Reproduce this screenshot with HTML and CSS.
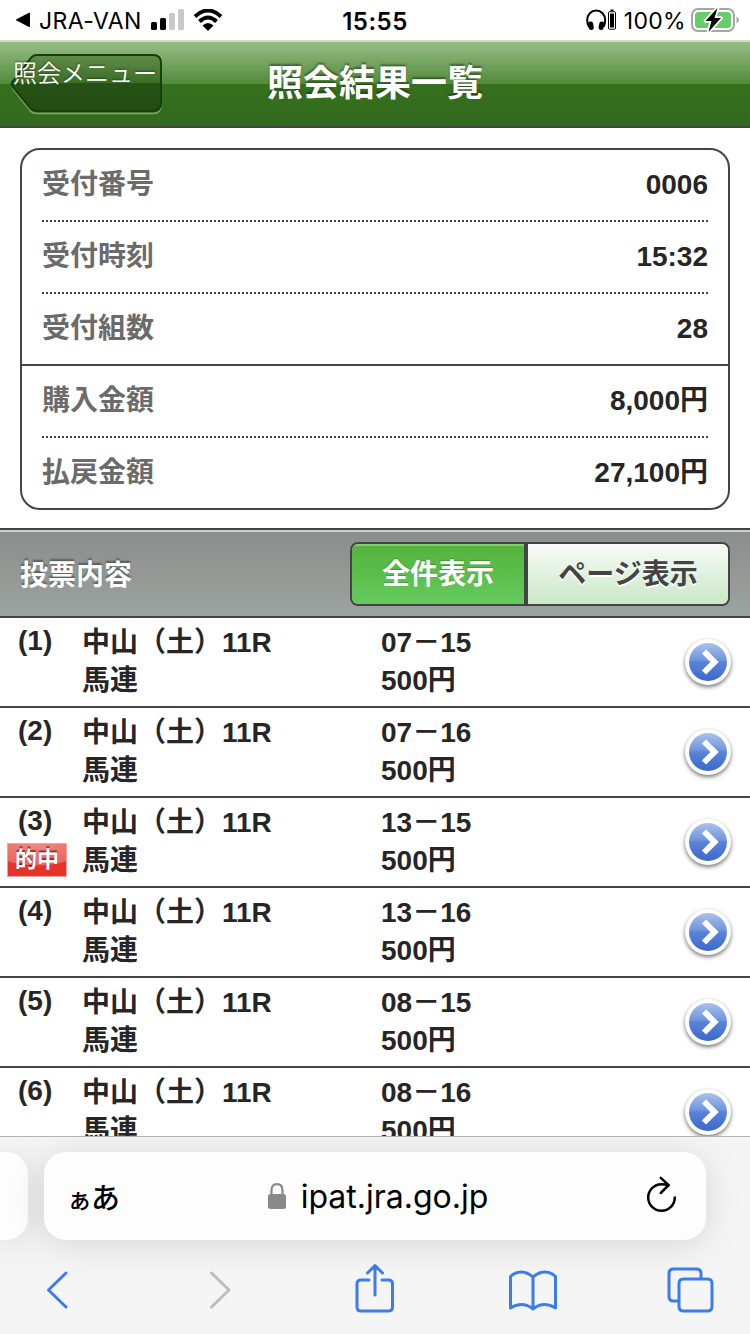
FILE: index.html
```html
<!DOCTYPE html>
<html lang="ja">
<head>
    <meta charset="UTF-8">
    <meta name="viewport" content="width=device-width, initial-scale=1.0">
    <title>照会結果一覧</title>
    <link rel="stylesheet" href="styles.css">
</head>
<body>
    <!-- Shared icons -->
    <svg class="defs" width="0" height="0">
        <defs>
            <linearGradient id="blue" x1="0" y1="0" x2="0" y2="1">
                <stop offset="0" stop-color="#aac2ec"/>
                <stop offset="0.45" stop-color="#6f94de"/>
                <stop offset="0.5" stop-color="#5a83d8"/>
                <stop offset="1" stop-color="#3a69cb"/>
            </linearGradient>
            <linearGradient id="menuFill" x1="0" y1="0" x2="0" y2="1">
                <stop offset="0" stop-color="#5f8d49"/>
                <stop offset="0.5" stop-color="#3b6e25"/>
                <stop offset="0.51" stop-color="#255214"/>
                <stop offset="1" stop-color="#234c13"/>
            </linearGradient>
            <symbol id="go" viewBox="0 0 54 54">
                <circle cx="27" cy="25" r="23" fill="#fff"/>
                <circle cx="27" cy="25" r="19" fill="url(#blue)"/>
                <path d="M23 14.500l10.500 10.500-10.500 10.500" fill="none" stroke="#fff" stroke-width="6"/>
            </symbol>
        </defs>
    </svg>

    <div class="status-bar">
        <div class="status-left">
            <svg class="back-app" width="16" height="16" viewBox="0 0 16 16"><path d="M1.500 7.200L14 .8Q15 .5 15 1.600V14.200Q15 15.300 14 14.900L1.500 8.600Q0 7.900 1.500 7.200z"/></svg>
            <span class="carrier">JRA-VAN</span>
            <svg class="signal" width="34" height="22" viewBox="0 0 34 22">
                <rect x="1" y="13" width="6" height="8" rx="1.500"/>
                <rect x="10" y="9" width="6" height="12" rx="1.500"/>
                <rect x="19" y="4" width="6" height="17" rx="1.500" fill="#c9c9c9"/>
                <rect x="28" y="0" width="6" height="21" rx="1.500" fill="#c9c9c9"/>
            </svg>
            <svg class="wifi" width="30" height="22" viewBox="0 0 30 22">
                <path d="M2 7.500Q15-4.500 28 7.500M6.500 12.500Q15 4.500 23.500 12.500" fill="none" stroke="#000" stroke-width="4"/>
                <path d="M9.500 16.500Q15 11.500 20.500 16.500L15 22z"/>
            </svg>
        </div>
        <div class="time">15:55</div>
        <div class="status-right">
            <svg width="31" height="22" viewBox="0 0 31 22">
                <path d="M3 18Q1.200 15.500 1.200 11A9 9.500 0 0 1 19.200 11Q19.200 15.500 17.400 18" fill="none" stroke="#000" stroke-width="2"/>
                <rect x="2.500" y="12.500" width="5" height="8.500" rx="2.500" transform="rotate(-10 5 17)"/>
                <rect x="12.900" y="12.500" width="5" height="8.500" rx="2.500" transform="rotate(10 15.400 17)"/>
                <rect x="22.500" y="2.700" width="7" height="17.500" rx="1" fill="none" stroke="#000" stroke-width="1"/>
                <rect x="24" y="4.500" width="4" height="14"/>
                <rect x="24.500" y="0.500" width="3" height="1.500"/>
            </svg>
            <span class="percent">100%</span>
            <svg class="battery" width="48" height="26" viewBox="0 0 48 26">
                <rect x="1" y="2" width="42" height="22" rx="6" fill="none" stroke="#a6a6a6" stroke-width="2"/>
                <rect x="4" y="5" width="36" height="16" rx="3.500" fill="#65ce68"/>
                <path d="M45.500 9.500Q48 11 48 13T45.500 16.500z" fill="#a6a6a6"/>
                <path d="M26.500 1L14.500 14H20.500L17.500 25L30 11H23.500z" stroke="#fff" stroke-width="3.500" stroke-linejoin="round" paint-order="stroke"/>
            </svg>
        </div>
    </div>

    <div class="page">
        <header class="header">
            <a class="menu-button">
                <svg class="menu-shape" width="154" height="62" viewBox="0 0 154 62">
                    <path d="M27 2H143Q151 2 151 10V50Q151 58 143 58H27Q23 58 20 55L3.500 34Q1 30.500 3.500 27L20 6Q23 2 27 2z" transform="translate(0 1.500)" fill="none" stroke="#7fa66c" stroke-width="1.500"/>
                    <path d="M27 1H143Q151 1 151 9V49Q151 57 143 57H27Q23 57 20 54L3 33Q.5 30 3 27L20 5Q23 1 27 1z" fill="url(#menuFill)" stroke="#173f0b" stroke-width="2"/>
                </svg>
                <span class="menu-text">照会メニュー</span>
            </a>
            <h1 class="title">照会結果一覧</h1>
        </header>

        <dl class="summary">
            <div class="summary-row"><dt>受付番号</dt><dd>0006</dd></div>
            <div class="summary-row"><dt>受付時刻</dt><dd>15:32</dd></div>
            <div class="summary-row group-end"><dt>受付組数</dt><dd>28</dd></div>
            <div class="summary-row"><dt>購入金額</dt><dd>8,000円</dd></div>
            <div class="summary-row last"><dt>払戻金額</dt><dd>27,100円</dd></div>
        </dl>

        <div class="section-bar">
            <h2 class="section-title">投票内容</h2>
            <div class="switch">
                <a class="switch-item active">全件表示</a>
                <a class="switch-item">ページ表示</a>
            </div>
        </div>

        <ul class="bets">
            <li class="bet">
                <div class="no">(1)</div>
                <div class="race">中山（土）11R<br>馬連</div>
                <div class="pick">07－15<br>500円</div>
                <svg class="go"><use href="#go"/></svg>
            </li>
            <li class="bet">
                <div class="no">(2)</div>
                <div class="race">中山（土）11R<br>馬連</div>
                <div class="pick">07－16<br>500円</div>
                <svg class="go"><use href="#go"/></svg>
            </li>
            <li class="bet">
                <div class="no">(3)<span class="hit">的中</span></div>
                <div class="race">中山（土）11R<br>馬連</div>
                <div class="pick">13－15<br>500円</div>
                <svg class="go"><use href="#go"/></svg>
            </li>
            <li class="bet">
                <div class="no">(4)</div>
                <div class="race">中山（土）11R<br>馬連</div>
                <div class="pick">13－16<br>500円</div>
                <svg class="go"><use href="#go"/></svg>
            </li>
            <li class="bet">
                <div class="no">(5)</div>
                <div class="race">中山（土）11R<br>馬連</div>
                <div class="pick">08－15<br>500円</div>
                <svg class="go"><use href="#go"/></svg>
            </li>
            <li class="bet">
                <div class="no">(6)</div>
                <div class="race">中山（土）11R<br>馬連</div>
                <div class="pick">08－16<br>500円</div>
                <svg class="go"><use href="#go"/></svg>
            </li>
        </ul>
    </div>

    <div class="browser-bar">
        <div class="tabs">
            <div class="tab-prev"></div>
            <div class="address">
                <span class="text-size"><small>ぁ</small>あ</span>
                <div class="url">
                    <svg width="18" height="26" viewBox="0 0 18 26">
                        <path d="M3.500 12V7.500Q3.500 1.200 9 1.200T14.500 7.500V12" fill="none" stroke="#88888d" stroke-width="2.200"/>
                        <rect x="0" y="11" width="18" height="15" rx="2.500" fill="#88888d"/>
                    </svg>
                    <span>ipat.jra.go.jp</span>
                </div>
                <svg class="reload" width="32" height="38" viewBox="0 0 32 38">
                    <path d="M23.500 8.200Q20 7.200 16.500 7.200A13.300 13.300 0 1 0 29.800 20.500" fill="none" stroke="#000" stroke-width="2.500" stroke-linecap="round"/>
                    <path d="M15.800 .8L23.600 8.200L15.800 16" fill="none" stroke="#000" stroke-width="2.500" stroke-linecap="round" stroke-linejoin="round"/>
                </svg>
            </div>
        </div>
        <div class="toolbar">
            <svg class="tool" viewBox="0 0 56 56"><path d="M37 12L19.500 29L37 46"/></svg>
            <svg class="tool disabled" viewBox="0 0 56 56"><path d="M23.500 12L41 29L23.500 46"/></svg>
            <svg class="tool" viewBox="0 0 56 56"><path d="M23 19H15Q11 19 11 23V46Q11 50 15 50H42.500Q46.500 50 46.500 46V23Q46.500 19 42.500 19H36M29 34V5M21.500 12L29 4.500L36.500 12"/></svg>
            <svg class="tool" viewBox="0 0 56 56"><path d="M28 16Q22 11 16.500 11Q10 11 5.500 15.500V47Q11 43.500 16.500 43.500Q22.500 43.500 28 48Q33.500 43.500 39.500 43.500Q45 43.500 50.500 47V15.500Q46 11 39.500 11Q34 11 28 16zM28 16V47"/></svg>
            <svg class="tool" viewBox="0 0 56 56"><path d="M15.500 40H10.500Q6 40 6 35.500V12.500Q6 8 10.500 8H33.500Q38 8 38 12.500V17.500M20.500 18H44.500Q49 18 49 22.500V45.500Q49 50 44.500 50H20.500Q16 50 16 45.500V22.500Q16 18 20.500 18z"/></svg>
        </div>
    </div>
</body>
</html>
```
FILE: styles.css
```css
* {
    box-sizing: border-box;
    margin: 0;
    padding: 0;
}

body {
    display: flex;
    flex-direction: column;
    width: 750px;
    height: 1334px;
    overflow: hidden;
    background-color: #fff;
    color: #262626;
    font-family: "Liberation Sans", "Noto Sans CJK JP", sans-serif;
    font-size: 28px;
}

svg {
    display: block;
    flex-shrink: 0;
}

.defs {
    position: absolute;
}

/* Status bar */
.status-bar {
    display: grid;
    grid-template-columns: 1fr auto 1fr;
    align-items: center;
    height: 40px;
    flex-shrink: 0;
    color: #000;
    font-family: Inter, sans-serif;
    font-size: 23px;
}

.status-left,
.status-right {
    display: flex;
    align-items: center;
}

.status-left {
    padding-left: 15px;
}

.status-right {
    justify-content: flex-end;
    padding-right: 11px;
}

.carrier {
    margin-left: 8px;
    padding-top: 2px;
    letter-spacing: 0.4px;
}

.signal {
    margin-left: 8px;
}

.wifi {
    margin-left: 9px;
}

.time {
    padding-top: 2px;
    font-weight: 600;
    font-size: 24px;
    letter-spacing: 0.5px;
}

.percent {
    margin: 0 5px 0 7px;
    padding-top: 2px;
    letter-spacing: 0.3px;
}

/* Page */
.page {
    flex: 1;
    overflow: hidden;
}

.header {
    display: grid;
    grid-template-columns: 1fr auto 1fr;
    height: 88px;
    padding-left: 10px;
    border-top: 2px solid #cbddc3;
    border-bottom: 2px solid #444;
    background: linear-gradient(#96bd86, #528b3a 50%, #35711d 50%, #33691d);
}

.menu-button {
    position: relative;
    height: 60px;
    margin-top: 12px;
}

.menu-shape {
    position: absolute;
    top: 0;
    left: 0;
}

.menu-text {
    position: relative;
    display: block;
    padding-left: 3px;
    color: #fff;
    font-size: 24px;
    font-weight: 350;
    line-height: 40px;
    text-shadow: 0 -1px 2px rgba(0, 0, 0, 0.4);
}

.title {
    margin-left: -10px;
    color: #fff;
    font-size: 36px;
    line-height: 84px;
    text-shadow: 0 -2px 2px rgba(0, 0, 0, 0.4);
}

/* Summary */
.summary {
    margin: 20px 20px 18px;
    border: 2px solid #444;
    border-radius: 20px;
    font-weight: bold;
}

.summary-row {
    display: flex;
    justify-content: space-between;
    height: 72px;
    margin: 0 20px;
    border-bottom: 2px dotted #444;
    line-height: 70px;
}

.summary-row dt {
    color: #6b6b6b;
}

.group-end {
    margin: 0;
    padding: 0 20px;
    border-bottom-style: solid;
}

.last {
    height: 70px;
    border-bottom: 0;
}

/* Section bar */
.section-bar {
    display: flex;
    justify-content: space-between;
    align-items: center;
    height: 90px;
    padding: 0 20px;
    border-top: 2px solid #444;
    border-bottom: 2px solid #444;
    background: linear-gradient(#898d8b, #9da3a0);
    box-shadow: inset 0 2px #ccd0cd;
}

.section-title {
    padding-bottom: 1px;
    color: #fff;
    font-size: 28px;
    text-shadow: 0 -2px 2px rgba(0, 0, 0, 0.4);
}

.switch {
    display: flex;
    width: 380px;
    height: 64px;
    margin-top: 2px;
    border: 2px solid #444;
    border-radius: 8px;
    overflow: hidden;
}

.switch-item {
    flex: 1;
    background: linear-gradient(#f8fbf7, #c9e8c6);
    color: #444;
    font-weight: bold;
    line-height: 62px;
    text-align: center;
    text-shadow: 0 2px 1px #fff;
}

.switch-item.active {
    flex: 0 0 176px;
    border-right: 4px solid #444;
    background: linear-gradient(#53b23a, #64cb5e);
    box-shadow: inset 0 2px 1px #86cd75;
    color: #fff;
    text-shadow: 0 -1px 1px rgba(0, 0, 0, 0.2);
}

/* Bets */
.bets {
    list-style: none;
    font-weight: bold;
}

.bet {
    display: flex;
    height: 90px;
    border-bottom: 2px solid #444;
    line-height: 38px;
}

.no {
    width: 82px;
    padding: 4px 0 0 18px;
}

.hit {
    display: block;
    width: 60px;
    height: 34px;
    margin: 3px 0 0 -11px;
    border: 1px solid #f1a39d;
    background: radial-gradient(ellipse 50px 22px at 50% 0, #f08a86 0, #ee655e 95%, #e63228 100%);
    color: #fff;
    font-size: 22px;
    line-height: 32px;
    text-align: center;
    text-shadow: 0 -2px 1px rgba(90, 0, 0, 0.6);
}

.race {
    width: 299px;
    padding-top: 6px;
}

.pick {
    flex: 1;
    padding-top: 6px;
}

.go {
    width: 54px;
    height: 54px;
    margin: 19px 15px 0 0;
    filter: drop-shadow(0 2px 2px rgba(0, 0, 0, 0.55));
}

/* Browser bar */
.browser-bar {
    height: 198px;
    flex-shrink: 0;
    border-top: 1px solid #b3b3b5;
    background-color: #f5f5f6;
    overflow: hidden;
}

.tabs {
    display: flex;
    gap: 16px;
    padding-top: 15px;
}

.tab-prev,
.address {
    height: 88px;
    background-color: #fdfdfe;
    box-shadow: 0 4px 36px rgba(0, 0, 0, 0.13);
}

.tab-prev {
    width: 28px;
    border-radius: 0 22px 22px 0;
}

.address {
    display: flex;
    align-items: center;
    justify-content: space-between;
    width: 662px;
    padding: 0 29px 0 23px;
    border-radius: 22px;
    color: #000;
}

.text-size {
    font-size: 29px;
    font-weight: 500;
    letter-spacing: -1px;
}

.text-size small {
    font-size: 25px;
}

.url {
    display: flex;
    align-items: center;
    gap: 15px;
    margin-right: 8px;
    font-family: Inter, sans-serif;
    font-size: 32px;
}

.reload {
    overflow: visible;
}

.toolbar {
    display: flex;
    justify-content: space-between;
    padding: 21px 31px 0 29px;
}

.tool {
    width: 56px;
    height: 56px;
    fill: none;
    stroke: #3b7de9;
    stroke-width: 3;
    stroke-linecap: round;
    stroke-linejoin: round;
}

.tool.disabled {
    stroke: #bdbdbf;
}
```
